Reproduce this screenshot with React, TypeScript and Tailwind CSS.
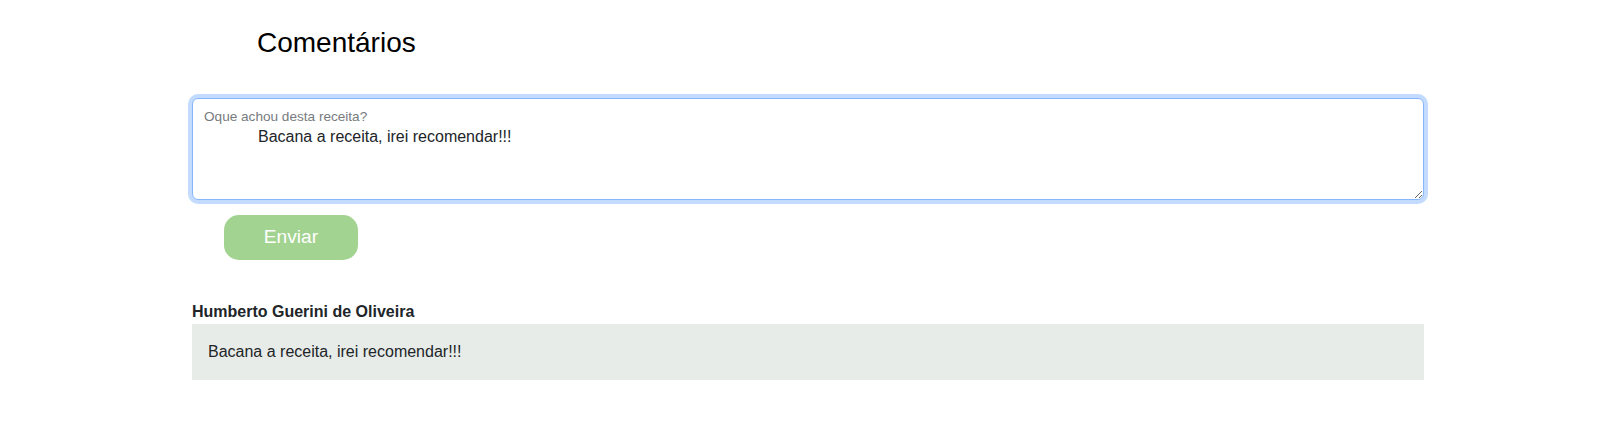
const App = () => {
  return (
    <div className="min-h-screen bg-white font-['Liberation_Sans',Arial,sans-serif] text-[#212529]">
      <div className="ml-[192px] w-[1232px]">
        <h2 className="pl-[65px] pt-[29px] text-[28px] leading-[28px] font-normal text-black">
          Comentários
        </h2>

        <div className="relative mt-[41px]">
          <label className="absolute left-[12px] top-[12px] text-[13.6px] leading-[14px] text-[#777b7e]">
            Oque achou desta receita?
          </label>
          <textarea
            className="block h-[102px] w-full rounded-[6px] border border-[#86b7fe] bg-white pl-[65px] pt-[26px] pr-3 text-base leading-6 text-[#212529] shadow-[0_0_0_4px_rgba(13,110,253,0.25)] outline-none"
            defaultValue="Bacana a receita, irei recomendar!!!"
          />
        </div>

        <button className="ml-[32px] mt-[15px] flex h-[45px] w-[134px] items-center justify-center rounded-[15px] bg-[#a3d391] text-[19.2px] text-white">
          Enviar
        </button>

        <p className="mt-[40px] text-base leading-6 font-bold">Humberto Guerini de Oliveira</p>
        <div className="bg-[#e8ece8] p-4 text-base leading-6">
          Bacana a receita, irei recomendar!!!
        </div>
      </div>
    </div>
  );
};

export default App;
